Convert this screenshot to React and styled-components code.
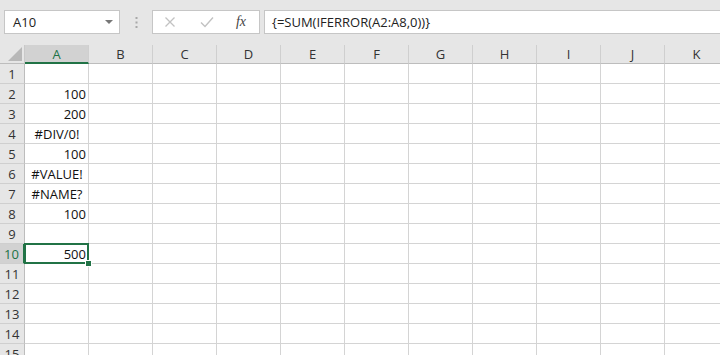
import React from "react";
import styled, { createGlobalStyle, css } from "styled-components";

const Global = createGlobalStyle`
  html, body { margin: 0; padding: 0; }
  body {
    width: 720px; height: 355px; overflow: hidden;
    background: #ffffff;
    font-family: "Open Sans", "Noto Sans", "Liberation Sans", sans-serif;
  }
`;

const Window = styled.div`
  width: 720px;
  height: 355px;
  overflow: hidden;
  display: flex;
  flex-direction: column;
  background: #e6e6e6;
`;

const FormulaBar = styled.div`
  height: 45px;
  flex: none;
  display: flex;
  align-items: flex-start;
  padding: 10px 0 0 4px;
  box-sizing: border-box;
`;

const Box = styled.div`
  height: 24px;
  box-sizing: border-box;
  background: #ffffff;
  border: 1px solid #c6c6c6;
  display: flex;
  align-items: center;
  flex: none;
`;

const NameBox = styled(Box)`
  width: 116px;
  padding: 0 6px 0 8px;
  justify-content: space-between;
  font-size: 13px;
  color: #222;
`;

const Grip = styled.div`
  width: 32px;
  height: 24px;
  flex: none;
  display: flex;
  align-items: center;
  justify-content: center;
`;

const FxBox = styled(Box)`
  width: 108px;
  padding-left: 11px;
`;

const FxButton = styled.span`
  display: flex;
  align-items: center;
  justify-content: center;
  margin-right: ${(p) => p.$gap || 0}px;
`;

const Input = styled(Box)`
  margin-left: 4px;
  flex: 1;
  border-right: none;
  padding-left: 7px;
  font-size: 13px;
  color: #222;
  white-space: nowrap;
`;

const Fx = styled.span`
  font-family: "Liberation Serif", "DejaVu Serif", serif;
  font-style: italic;
  font-size: 14px;
  color: #444;
  width: 30px;
  text-align: center;
`;

const Sheet = styled.div`
  flex: 1;
  display: grid;
  grid-template-columns: 25px repeat(11, 64px);
  grid-auto-rows: 20px;
  grid-template-rows: 19px;
  background: #ffffff;
  overflow: hidden;
`;

const Corner = styled.div`
  background: #e6e6e6;
  border-bottom: 1px solid #bdbdbd;
  border-right: 1px solid #c9c9c9;
  box-sizing: border-box;
  display: flex;
  align-items: flex-end;
  justify-content: flex-end;
  padding: 0 2px 2px 0;
`;

const ColHead = styled.div`
  background: ${(p) => (p.$sel ? "#d2d2d2" : "#e6e6e6")};
  border-right: 1px solid #cfcfcf;
  border-bottom: ${(p) => (p.$sel ? "2px solid #217346" : "1px solid #bdbdbd")};
  box-sizing: border-box;
  display: flex;
  align-items: center;
  justify-content: center;
  font-size: 13px;
  color: ${(p) => (p.$sel ? "#217346" : "#333")};
  padding-top: ${(p) => (p.$sel ? "1px" : "0")};
`;

const RowHead = styled.div`
  background: ${(p) => (p.$sel ? "#d2d2d2" : "#e6e6e6")};
  border-bottom: 1px solid #cfcfcf;
  border-right: ${(p) => (p.$sel ? "2px solid #217346" : "1px solid #bdbdbd")};
  box-sizing: border-box;
  display: flex;
  align-items: center;
  justify-content: center;
  font-size: 13px;
  color: ${(p) => (p.$sel ? "#217346" : "#333")};
`;

const Cell = styled.div`
  border-right: 1px solid #d4d4d4;
  border-bottom: 1px solid #d4d4d4;
  box-sizing: border-box;
  display: flex;
  align-items: center;
  padding: 0 2px 0 3px;
  font-size: 13px;
  color: #111;
  white-space: nowrap;
  justify-content: ${(p) =>
    p.$align === "right" ? "flex-end" : p.$align === "center" ? "center" : "flex-start"};
  position: relative;
  ${(p) =>
    p.$active &&
    css`
      &::after {
        content: "";
        position: absolute;
        left: -1px;
        top: -1px;
        right: -1px;
        bottom: -1px;
        border: 2px solid #217346;
        pointer-events: none;
      }
      &::before {
        content: "";
        position: absolute;
        right: -4px;
        bottom: -4px;
        width: 5px;
        height: 5px;
        background: #217346;
        border: 1px solid #ffffff;
        z-index: 2;
      }
    `}
`;

const cols = ["A", "B", "C", "D", "E", "F", "G", "H", "I", "J", "K"];
const data = {
  2: ["100", "right"],
  3: ["200", "right"],
  4: ["#DIV/0!", "center"],
  5: ["100", "right"],
  6: ["#VALUE!", "center"],
  7: ["#NAME?", "center"],
  8: ["100", "right"],
  10: ["500", "right"],
};

export default function App() {
  const rows = Array.from({ length: 15 }, (_, i) => i + 1);
  return (
    <Window>
      <Global />
      <FormulaBar>
        <NameBox>
          <span>A10</span>
          <svg width="8" height="5" viewBox="0 0 8 5">
            <path d="M0 0 L8 0 L4 4 Z" fill="#777" />
          </svg>
        </NameBox>
        <Grip>
          <svg width="3" height="11" viewBox="0 0 3 11">
            <rect x="0.5" y="0" width="2" height="2" fill="#a8a8a8" />
            <rect x="0.5" y="4.5" width="2" height="2" fill="#a8a8a8" />
            <rect x="0.5" y="9" width="2" height="2" fill="#a8a8a8" />
          </svg>
        </Grip>
        <FxBox>
          <FxButton $gap={24}>
            <svg width="12" height="12" viewBox="0 0 12 12">
              <path d="M1.5 1.5 L10.5 10.5 M10.5 1.5 L1.5 10.5" stroke="#c2c2c2" strokeWidth="1.3" fill="none" />
            </svg>
          </FxButton>
          <FxButton $gap={12}>
            <svg width="14" height="12" viewBox="0 0 14 12">
              <path d="M1 6.5 L5 10.5 L13 1.5" stroke="#c2c2c2" strokeWidth="1.4" fill="none" />
            </svg>
          </FxButton>
          <Fx>fx</Fx>
        </FxBox>
        <Input>{"{=SUM(IFERROR(A2:A8,0))}"}</Input>
      </FormulaBar>
      <Sheet>
        <Corner>
          <svg width="14" height="14" viewBox="0 0 14 14">
            <path d="M14 0 L14 14 L0 14 Z" fill="#b8b8b8" />
          </svg>
        </Corner>
        {cols.map((c) => (
          <ColHead key={c} $sel={c === "A"}>
            {c}
          </ColHead>
        ))}
        {rows.map((r) => (
          <React.Fragment key={r}>
            <RowHead $sel={r === 10}>{r}</RowHead>
            {cols.map((c, ci) => {
              const d = ci === 0 ? data[r] : undefined;
              return (
                <Cell key={c} $align={d ? d[1] : "left"} $active={ci === 0 && r === 10}>
                  {d ? d[0] : ""}
                </Cell>
              );
            })}
          </React.Fragment>
        ))}
      </Sheet>
    </Window>
  );
}
